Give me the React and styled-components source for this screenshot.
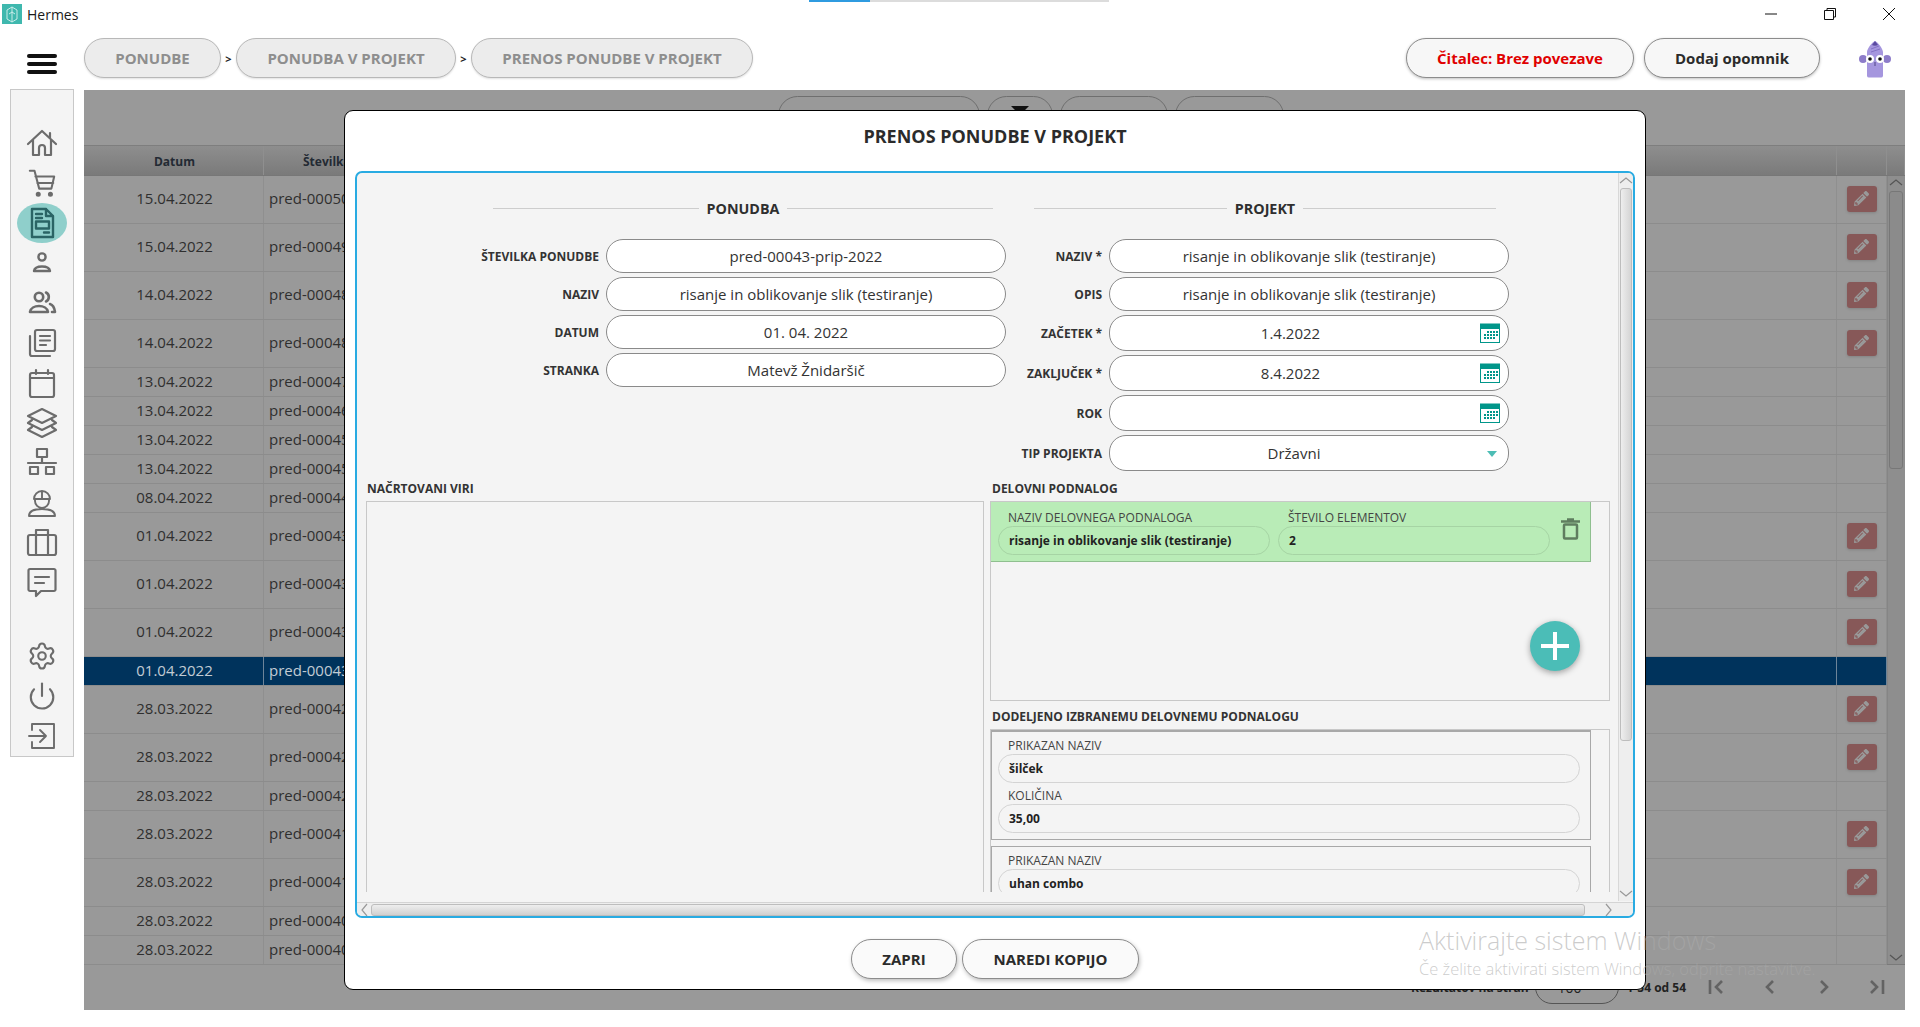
import React from 'react';
import styled, { createGlobalStyle } from 'styled-components';
import { FaPencilAlt } from 'react-icons/fa';
import { Settings, Power } from 'lucide-react';

const GlobalStyle = createGlobalStyle`
  html, body { margin: 0; padding: 0; background: #fff; }
  * { box-sizing: border-box; }
  body { font-family: "Open Sans", "Liberation Sans", sans-serif; color: #333; }
`;

const Page = styled.div`
  position: relative;
  width: 1920px;
  height: 1027px;
  overflow: hidden;
  background: #fff;
`;

/* window chrome */
const TitleBar = styled.div`
  position: relative;
  display: flex;
  align-items: center;
  height: 30px;
  padding: 0 0 2px 2px;
  font: 400 14px "Open Sans", sans-serif;
  color: #1a1a1a;
  span { margin-left: 5px; }
`;

const Progress = styled.div`
  position: absolute;
  top: 0;
  left: 809px;
  width: 300px;
  height: 2px;
  background: linear-gradient(to right, #2f9be0 0 61px, #dcdcdc 61px);
`;

const WindowButtons = styled.div`
  display: flex;
  margin-left: auto;
  padding-right: 2px;
`;

const WindowButton = styled.div`
  display: flex;
  align-items: center;
  justify-content: center;
  width: 59px;
  height: 26px;
`;

const TopBar = styled.div`
  display: flex;
  align-items: flex-start;
  height: 59px;
  padding: 8px 29px 0 27px;
`;

const Hamburger = styled.div`
  display: flex;
  flex-direction: column;
  gap: 4px;
  width: 30px;
  margin: 16px 27px 0 0;
  i {
    display: block;
    height: 4px;
    border-radius: 2px;
    background: #111;
  }
`;

const Crumbs = styled.div`
  display: flex;
  align-items: center;
`;

const Crumb = styled.div`
  display: flex;
  align-items: center;
  justify-content: center;
  width: ${({ $w }) => $w}px;
  height: 40px;
  border: 1px solid #b8b8b8;
  border-radius: 20px;
  background: #ececec;
  font-size: 15px;
  font-weight: 700;
  color: #8e8e8e;
  box-shadow: 0 1px 2px rgba(0,0,0,0.12);
`;

const CrumbArrow = styled.span`
  width: 15px;
  text-align: center;
  font-size: 11px;
  font-weight: 700;
  color: #222;
`;

const TopActions = styled.div`
  display: flex;
  align-items: center;
  gap: 10px;
  margin-left: auto;
`;

const TopButton = styled.div`
  display: flex;
  align-items: center;
  justify-content: center;
  width: ${({ $w }) => $w}px;
  height: 40px;
  border: 1.5px solid #8c8c8c;
  border-radius: 20px;
  background: #f7f7f7;
  font-size: 15px;
  font-weight: 700;
  color: ${({ $alert }) => $alert ? '#e00000' : '#2b2b2b'};
  box-shadow: 0 1px 3px rgba(0,0,0,0.25);
`;

const AvatarSlot = styled.div`
  width: 32px;
  height: 38px;
  margin-left: 29px;
  margin-top: 2px;
`;

/* page */
const Body = styled.div`
  display: flex;
  align-items: flex-start;
  gap: 10px;
  padding-left: 10px;
`;

const Sidebar = styled.nav`
  display: flex;
  flex-direction: column;
  align-items: center;
  width: 64px;
  height: 668px;
  padding-top: 33px;
  border: 1px solid #c8c8c8;
  background: #f4f4f4;
`;

const NavItem = styled.div`
  position: relative;
  display: flex;
  align-items: center;
  justify-content: center;
  width: 50px;
  height: 40px;
  margin-top: ${({ $gap }) => $gap ? '34px' : '0'};
  border-radius: 50%;
  background: ${({ $active }) => $active ? '#8fcfcb' : 'transparent'};
  color: ${({ $active }) => $active ? '#2a6465' : '#6c6c6c'};
`;

const Main = styled.main`
  display: flex;
  flex-direction: column;
  width: 1821px;
  height: 920px;
  margin-top: 1px;
  padding-top: 6px;
  background: #999;
`;

const Toolbar = styled.div`
  display: flex;
  gap: 7px;
  height: 39px;
  margin-bottom: 10px;
  padding-left: 694px;
`;

const ToolPill = styled.div`
  width: ${({ $w }) => $w}px;
  height: 39px;
  border: 1px solid #6f6f6f;
  border-radius: 20px;
  text-align: center;
  svg { margin-top: 8px; }
`;

const TableHead = styled.div`
  display: grid;
  grid-template-columns: 180px 1fr 50px 18px;
  height: 31px;
  border-top: 1px solid #7e7e7e;
  border-bottom: 1px solid #777;
  background: linear-gradient(#8e8e8e, #7a7a7a);
`;

const HeadCell = styled.div`
  display: flex;
  align-items: center;
  justify-content: ${({ $left }) => $left ? 'flex-start' : 'center'};
  padding: 2px 0 0 ${({ $left }) => $left ? '39px' : '2px'};
  border-right: 1px solid #8f8f8f;
  font-size: 12px;
  font-weight: 700;
  color: #232a33;
`;

const TableBody = styled.div`
  display: flex;
  height: 789px;
  border-bottom: 1px solid #7a7a7a;
`;

const Rows = styled.div`
  flex: 1;
`;

const Row = styled.div`
  display: grid;
  grid-template-columns: 180px 1fr 50px;
  height: ${({ $tall }) => $tall ? 48 : 29}px;
  border-bottom: 1px solid #8c8c8c;
  background: ${({ $selected }) => $selected ? '#00335c' : 'transparent'};
  color: ${({ $selected }) => $selected ? '#c2ccd4' : '#2f2f2f'};
  font-size: 15px;
  & > div { padding-bottom: ${({ $tall }) => $tall ? 4 : 2}px; }
`;

const Cell = styled.div`
  display: flex;
  align-items: center;
  justify-content: ${({ $center }) => $center ? 'center' : 'flex-start'};
  padding-left: ${({ $center }) => $center ? '2px' : '5px'};
  border-right: 1px solid ${({ $selected }) => $selected ? '#6d8499' : '#8f8f8f'};
  white-space: nowrap;
`;

const EditButton = styled.div`
  display: flex;
  align-items: center;
  justify-content: center;
  width: 30px;
  height: 26px;
  margin: 2px 0 0 -2px;
  border-radius: 3px;
  background: #875858;
  color: #999;
  box-shadow: 0 1px 3px rgba(0,0,0,0.15);
`;

const TableScroll = styled.div`
  position: relative;
  width: 18px;
  background: #8e8e8e;
  border-left: 1px solid #858585;
`;

const TableThumb = styled.div`
  position: absolute;
  top: 15px;
  left: 1px;
  width: 14px;
  height: 278px;
  border: 1px solid #777;
  border-radius: 3px;
  background: #8b8b8b;
`;

const ScrollArrow = styled.svg`
  position: absolute;
  display: block;
`;

const Pagination = styled.div`
  display: flex;
  align-items: center;
  justify-content: flex-end;
  height: 44px;
  padding-right: 1px;
  font-size: 12px;
  font-weight: 700;
  color: #222;
`;

const PageInfo = styled.span`
  margin-right: 2px;
`;

const PageSize = styled.div`
  position: relative;
  width: 84px;
  height: 34px;
  margin: 0 8px 0 6px;
  padding: 7px 0 0 22px;
  border: 1px solid #555;
  border-radius: 17px;
  font-size: 14px;
  font-weight: 400;
  &::after {
    content: '';
    position: absolute;
    top: 14px;
    right: 10px;
    border: 4px solid transparent;
    border-top: 5px solid #2f8f8a;
  }
`;

const PageButton = styled.div`
  display: flex;
  align-items: center;
  justify-content: center;
  width: 54px;
  color: #636363;
`;

/* dialog */
const Modal = styled.section`
  position: absolute;
  top: 110px;
  left: 344px;
  display: flex;
  flex-direction: column;
  align-items: center;
  width: 1302px;
  height: 880px;
  border: 1px solid #000;
  border-radius: 9px;
  background: #fff;
`;

const ModalTitle = styled.h1`
  width: 100%;
  height: 60px;
  margin: 0;
  font-size: 18px;
  font-weight: 700;
  line-height: 50px;
  text-align: center;
  color: #2b2b2b;
`;

const Panel = styled.div`
  display: flex;
  flex-direction: column;
  width: 1280px;
  height: 747px;
  border: 2px solid #29abe2;
  border-radius: 7px;
  background: #f4f4f4;
  overflow: hidden;
`;

const PanelMain = styled.div`
  display: flex;
  height: 729px;
`;

const Viewport = styled.div`
  width: 1261px;
  height: 719px;
  overflow: hidden;
`;

const FormGrid = styled.div`
  display: flex;
  align-items: flex-start;
  padding-top: 25px;
`;

const FormColumn = styled.div`
  display: grid;
  grid-template-columns: ${({ $label }) => $label}px 400px;
  column-gap: 7px;
  row-gap: 4px;
`;

const Divider = styled.div`
  grid-column: 1 / -1;
  display: flex;
  align-items: center;
  gap: 8px;
  height: 20px;
  margin: 0 ${({ $right }) => $right}px 17px ${({ $left }) => $left}px;
  font-size: 14.3px;
  font-weight: 700;
  color: #2f2f2f;
  &::before, &::after {
    content: '';
    flex: 1;
    height: 1px;
    background: #cdcdcd;
  }
`;

const FieldLabel = styled.label`
  display: flex;
  align-items: center;
  justify-content: flex-end;
  font-size: 12px;
  font-weight: 700;
  color: #333;
  white-space: nowrap;
`;

const Input = styled.div`
  position: relative;
  display: flex;
  align-items: center;
  justify-content: center;
  height: ${({ $h }) => $h || 34}px;
  padding-right: ${({ $pad }) => $pad || 0}px;
  border: 1px solid #8a8a8a;
  border-radius: 17px;
  background: #fff;
  font-size: 15px;
  color: #333;
`;

const InputIcon = styled.span`
  position: absolute;
  top: 7px;
  right: 8px;
  display: flex;
`;

const SelectArrow = styled.span`
  position: absolute;
  top: 15px;
  right: 11px;
  border: 5px solid transparent;
  border-top: 6px solid #4dbdb5;
  border-bottom: 0;
`;

const LowerGrid = styled.div`
  display: grid;
  grid-template-columns: 618px 620px;
  column-gap: 6px;
  padding: 9px 0 0 9px;
`;

const LowerColumn = styled.div`
  display: flex;
  flex-direction: column;
`;

const SectionTitle = styled.div`
  height: 16px;
  margin-bottom: 5px;
  padding-left: ${({ $pad }) => $pad}px;
  font-size: 12px;
  font-weight: 700;
  line-height: 18px;
  color: #333;
  white-space: nowrap;
`;

const Box = styled.div`
  position: relative;
  flex: ${({ $grow }) => $grow ? 1 : 'none'};
  height: ${({ $h }) => $h ? `${$h}px` : 'auto'};
  border: 1px solid #c8c8c8;
`;

const OrderCard = styled.div`
  display: flex;
  width: 600px;
  height: 60px;
  padding: 8px 0 0 7px;
  border-right: 1px solid #8fbf8f;
  border-bottom: 1px solid #8fbf8f;
  background: #b9ecb7;
  gap: 8px;
`;

const OrderField = styled.div`
  width: 272px;
`;

const MiniLabel = styled.div`
  height: 16px;
  padding-left: 10px;
  font-size: 12px;
  line-height: 16px;
  color: #444;
  white-space: nowrap;
`;

const ValuePill = styled.div`
  display: flex;
  align-items: center;
  height: 29px;
  padding-left: 10px;
  border: 1px solid ${({ $green }) => $green ? '#a6d4a4' : '#d4d4d4'};
  border-radius: 15px;
  font-size: 12px;
  font-weight: 700;
  color: #222;
`;

const TrashSlot = styled.div`
  margin: 8px 0 0 3px;
  color: #5f7d5f;
`;

const AddButton = styled.div`
  position: absolute;
  top: 119px;
  right: 29px;
  display: flex;
  align-items: center;
  justify-content: center;
  width: 50px;
  height: 50px;
  border-radius: 50%;
  background: #4bbdb7;
  box-shadow: 0 2px 6px rgba(0,0,0,0.35);
`;

const ItemCard = styled.div`
  width: 600px;
  height: ${({ $h }) => $h}px;
  margin-bottom: 6px;
  padding: 6px 10px 0 6px;
  border: 1px solid #a8a8a8;
  border-top-width: ${({ $thick }) => $thick ? '2px' : '1px'};
`;

const ItemGap = styled.div`
  height: 5px;
`;

const VerticalBar = styled.div`
  position: relative;
  width: 15px;
  height: 728px;
  margin-left: 0;
  border-left: 1px solid #d8d8d8;
  background: #eeeeee;
`;

const VerticalThumb = styled.div`
  position: absolute;
  top: 15px;
  left: 1px;
  width: 12px;
  height: 553px;
  border: 1px solid #bdbdbd;
  border-radius: 3px;
  background: linear-gradient(to right, #eeeeee, #d4d4d4);
`;

const HorizontalBar = styled.div`
  position: relative;
  flex: 1;
  border-top: 1px solid #d4d4d4;
  background: #eeeeee;
`;

const HorizontalThumb = styled.div`
  position: absolute;
  top: 1px;
  left: 14px;
  width: 1214px;
  height: 12px;
  border: 1px solid #bdbdbd;
  border-radius: 3px;
  background: linear-gradient(#eeeeee, #d0d0d0);
`;

const ModalActions = styled.div`
  display: flex;
  gap: 5px;
  padding-top: 21px;
`;

const ModalButton = styled.div`
  display: flex;
  align-items: center;
  justify-content: center;
  width: ${({ $w }) => $w}px;
  height: 40px;
  border: 1.5px solid #8c8c8c;
  border-radius: 20px;
  background: #fafafa;
  font-size: 15px;
  font-weight: 700;
  color: #2b2b2b;
  box-shadow: 1px 2px 4px rgba(0,0,0,0.25);
`;

const Watermark = styled.div`
  position: absolute;
  top: 923px;
  left: 1419px;
  color: rgba(170,170,170,0.6);
  font-weight: 300;
  white-space: nowrap;
  pointer-events: none;
  div:first-child { font-size: 25px; line-height: 34px; }
  div:last-child { font-size: 16.5px; line-height: 22px; margin-top: 1px; }
`;

const Svg = ({ children, size = 32, fill = 'none', sw = 2.2 }) => (
  <svg width={size} height={size} viewBox="0 0 32 32" fill={fill} stroke="currentColor" strokeWidth={sw} strokeLinecap="round" strokeLinejoin="round">
    {children}
  </svg>
);

const icons = {
  home: <Svg><path d="M2 17 16 4l14 13M24 11V6M7 13v15h6v-7a3 3 0 0 1 6 0v7h6V13" /></Svg>,
  cart: <Svg size={30}><path d="M3 3h5l5 19h13l3-13H9M11 16h17" /><circle cx="12" cy="28" r="1.6" fill="currentColor" /><circle cx="25" cy="28" r="1.6" fill="currentColor" /></Svg>,
  doc: <Svg sw={2.4}><path d="M6 2h14l7 7v21H6zM20 2v7h7M10 7h6M10 11h6M10 14.5h13v7H10zM18 25.5h5" /></Svg>,
  person: <Svg sw={2.4}><circle cx="16" cy="10" r="3.6" /><path d="M8 24c1-6 15-6 16 0z" /></Svg>,
  people: <Svg sw={2.6}><circle cx="13" cy="10" r="4.2" /><path d="M4 25c1-8 17-8 18 0zM20 5.5a5 5 0 0 1 0 9M24 17c3 1 4.500 4 5 8h-3" /></Svg>,
  copy: <Svg><rect x="9" y="3" width="20" height="21" rx="2" /><path d="M4 9v18a2 2 0 0 0 2 2h18M14 9h10M14 13.500h10M14 18h6" /></Svg>,
  calendar: <Svg><rect x="4" y="6" width="24" height="24" rx="2" /><path d="M4 11h24M10 3v4M22 3v4" /></Svg>,
  layers: <Svg><path d="M16 2 30 9l-14 7L2 9zM6 13l-4 3 14 7 14-7-4-3M6 20l-4 3 14 7 14-7-4-3" /></Svg>,
  network: <Svg><rect x="11" y="3" width="10" height="8" /><path d="M16 11v6M2 17h28" /><rect x="4" y="21" width="8" height="7" /><rect x="20" y="21" width="8" height="7" /></Svg>,
  worker: <Svg sw={1.9}><path d="M8 13a8 8 0 0 1 16 0zM16 5v8M9 13v2a7 7 0 0 0 14 0v-2M3 30c0-6 7-7 13-7s13 1 13 7z" /></Svg>,
  briefcase: <Svg><rect x="2" y="9" width="28" height="20" rx="2" /><path d="M10 9V4h12v5M10 9v20M22 9v20" /></Svg>,
  chat: <Svg><path d="M4 3h24a1.500 1.500 0 0 1 1.500 1.500v19a1.500 1.500 0 0 1-1.500 1.500H15l-5 5v-5H4a1.500 1.500 0 0 1-1.500-1.500v-19A1.500 1.500 0 0 1 4 3zM9 11h14M9 17h9" /></Svg>,
  exit: <Svg sw={1.9}><path d="M6 10V4h22v24H6v-6M3 16h17M14 10l6 6-6 6" /></Svg>
};

const navItems = [
  { key: 'home' },
  { key: 'cart' },
  { key: 'doc', active: true },
  { key: 'person' },
  { key: 'people' },
  { key: 'copy' },
  { key: 'calendar' },
  { key: 'layers' },
  { key: 'network' },
  { key: 'worker' },
  { key: 'briefcase' },
  { key: 'chat' }
];

const rows = [
  ['15.04.2022', 'pred-00050', 1],
  ['15.04.2022', 'pred-00049', 1],
  ['14.04.2022', 'pred-00048', 1],
  ['14.04.2022', 'pred-00048', 1],
  ['13.04.2022', 'pred-00047', 0],
  ['13.04.2022', 'pred-00046', 0],
  ['13.04.2022', 'pred-00045', 0],
  ['13.04.2022', 'pred-00045', 0],
  ['08.04.2022', 'pred-00044', 0],
  ['01.04.2022', 'pred-00043', 1],
  ['01.04.2022', 'pred-00043', 1],
  ['01.04.2022', 'pred-00043', 1],
  ['01.04.2022', 'pred-00043', 0, true],
  ['28.03.2022', 'pred-00042', 1],
  ['28.03.2022', 'pred-00042', 1],
  ['28.03.2022', 'pred-00042', 0],
  ['28.03.2022', 'pred-00041', 1],
  ['28.03.2022', 'pred-00041', 1],
  ['28.03.2022', 'pred-00040', 0],
  ['28.03.2022', 'pred-00040', 0]
];

const AppLogo = () => (
  <svg width="20" height="20" viewBox="0 0 20 20">
    <rect width="20" height="20" fill="#3fb8ae" />
    <path d="M10 3 15 6v9l-5 3-5-3V6zM10 3v15M7 10l3-2 3 2" fill="none" stroke="#d8f2ef" strokeWidth="0.9" />
  </svg>
);

const Avatar = () => (
  <svg width="32" height="38" viewBox="0 0 32 38">
    <circle cx="4" cy="19" r="4" fill="#8d7cc9" />
    <circle cx="28" cy="19" r="4" fill="#8d7cc9" />
    <path d="M8 36V12c0-3 5-10 8-11 3 1 8 8 8 11v24a2 2 0 0 1-2 1.500H10A2 2 0 0 1 8 36z" fill="#a596de" />
    <path d="M13 5 16 1l3 4c-2 1-4 1-6 0z" fill="#5a4aa0" />
    <path d="M12 9l8-3M12 12l9-3" stroke="#7a68bf" strokeWidth="0.8" />
    <circle cx="11" cy="19" r="4" fill="#fff" />
    <circle cx="21" cy="19" r="4" fill="#fff" />
    <circle cx="11" cy="19" r="1.800" fill="#111" />
    <circle cx="21" cy="19" r="1.800" fill="#111" />
    <path d="M16 22v4" stroke="#3a3070" strokeWidth="0.8" />
  </svg>
);

const CalendarIcon = () => (
  <svg width="20" height="20" viewBox="0 0 20 20">
    <rect x="0.5" y="1" width="19" height="18.500" fill="#fff" stroke="#00968a" />
    <rect x="0" y="1" width="20" height="5" fill="#00968a" />
    <g fill="#00968a">
      {[8, 11, 14].map(y => [4, 7, 10, 13, 16].map(x => (y > 8 || x > 4) && (y < 14 || x < 16) && <rect key={`${x}-${y}`} x={x} y={y} width="2" height="2" />))}
    </g>
  </svg>
);

const TrashIcon = () => (
  <svg width="19" height="22" viewBox="0 0 19 22" fill="none" stroke="currentColor">
    <path d="M0 3.500h19M6 1.500h7" strokeWidth="2.500" />
    <rect x="3" y="6.500" width="13" height="14" rx="1" strokeWidth="2.500" />
  </svg>
);

const Chevron = ({ dir, color = '#999', style }) => {
  const d = { up: 'M1 7 7 2l6 5', down: 'M1 2 7 7l6-5', left: 'M7 1 2 7l5 6', right: 'M2 1 7 7l-5 6' }[dir];
  const vertical = dir === 'up' || dir === 'down';
  return (
    <ScrollArrow style={style} width={vertical ? 14 : 9} height={vertical ? 9 : 14} viewBox={vertical ? '0 0 14 9' : '0 0 9 14'} fill="none" stroke={color} strokeWidth="1.200">
      <path d={d} />
    </ScrollArrow>
  );
};

const PageIcon = ({ d }) => (
  <svg width="18" height="16" viewBox="0 0 18 16" fill="none" stroke="currentColor" strokeWidth="2.600">
    <path d={d} />
  </svg>
);

const FormRow = ({ label, value, h, icon, select, pad }) => (
  <>
    <FieldLabel>{label}</FieldLabel>
    <Input $h={h} $pad={pad}>
      {value}
      {icon && <InputIcon><CalendarIcon /></InputIcon>}
      {select && <SelectArrow />}
    </Input>
  </>
);

const ItemFields = ({ name, amount }) => (
  <>
    <MiniLabel>PRIKAZAN NAZIV</MiniLabel>
    <ValuePill>{name}</ValuePill>
    {amount && (
      <>
        <ItemGap />
        <MiniLabel>KOLIČINA</MiniLabel>
        <ValuePill>{amount}</ValuePill>
      </>
    )}
  </>
);

export default function App() {
  return (
    <Page>
      <GlobalStyle />
      <TitleBar>
        <AppLogo />
        <span>Hermes</span>
        <Progress />
        <WindowButtons>
          <WindowButton>
            <svg width="12" height="12" viewBox="0 0 12 12" stroke="#111"><path d="M0 6h12" /></svg>
          </WindowButton>
          <WindowButton>
            <svg width="12" height="12" viewBox="0 0 12 12" fill="none" stroke="#111"><path d="M3 2.500V.5h8.500V9H9.500M.5 2.500H9.500V11.500H.5z" /></svg>
          </WindowButton>
          <WindowButton>
            <svg width="12" height="12" viewBox="0 0 12 12" stroke="#111"><path d="M0 0l12 12M12 0 0 12" /></svg>
          </WindowButton>
        </WindowButtons>
      </TitleBar>

      <TopBar>
        <Hamburger><i /><i /><i /></Hamburger>
        <Crumbs>
          <Crumb $w={137}>PONUDBE</Crumb>
          <CrumbArrow>&gt;</CrumbArrow>
          <Crumb $w={220}>PONUDBA V PROJEKT</Crumb>
          <CrumbArrow>&gt;</CrumbArrow>
          <Crumb $w={282}>PRENOS PONUDBE V PROJEKT</Crumb>
        </Crumbs>
        <TopActions>
          <TopButton $w={228} $alert>Čitalec: Brez povezave</TopButton>
          <TopButton $w={176}>Dodaj opomnik</TopButton>
          <AvatarSlot><Avatar /></AvatarSlot>
        </TopActions>
      </TopBar>

      <Body>
        <Sidebar>
          {navItems.map(item => (
            <NavItem key={item.key} $active={item.active}>{icons[item.key]}</NavItem>
          ))}
          <NavItem $gap><Settings size={30} strokeWidth={1.7} /></NavItem>
          <NavItem><Power size={30} strokeWidth={1.7} /></NavItem>
          <NavItem>{icons.exit}</NavItem>
        </Sidebar>

        <Main>
          <Toolbar>
            <ToolPill $w={202} />
            <ToolPill $w={66}>
              <svg width="18" height="8" viewBox="0 0 18 8"><path d="M0 0h18l-6 6v2H6V6z" fill="#111" /></svg>
            </ToolPill>
            <ToolPill $w={108} />
            <ToolPill $w={109} />
          </Toolbar>

          <TableHead>
            <HeadCell>Datum</HeadCell>
            <HeadCell $left>Številka</HeadCell>
            <HeadCell />
            <HeadCell />
          </TableHead>
          <TableBody>
            <Rows>
              {rows.map(([date, number, tall, selected], i) => (
                <Row key={i} $tall={tall} $selected={selected}>
                  <Cell $center $selected={selected}>{date}</Cell>
                  <Cell $selected={selected}>{number}</Cell>
                  <Cell $center $selected={selected}>
                    {tall ? <EditButton><FaPencilAlt size={15} /></EditButton> : null}
                  </Cell>
                </Row>
              ))}
            </Rows>
            <TableScroll>
              <Chevron dir="up" color="#555" style={{ top: 2, left: 1 }} />
              <TableThumb />
              <Chevron dir="down" color="#555" style={{ bottom: 2, left: 1 }} />
            </TableScroll>
          </TableBody>
          <Pagination>
            Rezultatov na stran
            <PageSize>100</PageSize>
            <PageInfo>1-54 od 54</PageInfo>
            <PageButton><PageIcon d="M4 1v14M16 2 10 8l6 6" /></PageButton>
            <PageButton><PageIcon d="M13 2 7 8l6 6" /></PageButton>
            <PageButton><PageIcon d="M7 2l6 6-6 6" /></PageButton>
            <PageButton><PageIcon d="M3 2l6 6-6 6M15 1v14" /></PageButton>
          </Pagination>
        </Main>
      </Body>

      <Modal>
        <ModalTitle>PRENOS PONUDBE V PROJEKT</ModalTitle>
        <Panel>
          <PanelMain>
            <Viewport>
              <FormGrid>
                <FormColumn $label={242}>
                  <Divider $left={136} $right={13}>PONUDBA</Divider>
                  <FormRow label="ŠTEVILKA PONUDBE" value="pred-00043-prip-2022" />
                  <FormRow label="NAZIV" value="risanje in oblikovanje slik (testiranje)" />
                  <FormRow label="DATUM" value="01. 04. 2022" />
                  <FormRow label="STRANKA" value="Matevž Žnidaršič" />
                </FormColumn>
                <FormColumn $label={96}>
                  <Divider $left={28} $right={13}>PROJEKT</Divider>
                  <FormRow label="NAZIV *" value="risanje in oblikovanje slik (testiranje)" />
                  <FormRow label="OPIS" value="risanje in oblikovanje slik (testiranje)" />
                  <FormRow label="ZAČETEK *" value="1.4.2022" h={36} pad={37} icon />
                  <FormRow label="ZAKLJUČEK *" value="8.4.2022" h={36} pad={37} icon />
                  <FormRow label="ROK" h={36} icon />
                  <FormRow label="TIP PROJEKTA" value="Državni" h={36} pad={30} select />
                </FormColumn>
              </FormGrid>

              <LowerGrid>
                <LowerColumn>
                  <SectionTitle $pad={1}>NAČRTOVANI VIRI</SectionTitle>
                  <Box $grow />
                </LowerColumn>
                <LowerColumn>
                  <SectionTitle $pad={2}>DELOVNI PODNALOG</SectionTitle>
                  <Box $h={200}>
                    <OrderCard>
                      <OrderField>
                        <MiniLabel>NAZIV DELOVNEGA PODNALOGA</MiniLabel>
                        <ValuePill $green>risanje in oblikovanje slik (testiranje)</ValuePill>
                      </OrderField>
                      <OrderField>
                        <MiniLabel>ŠTEVILO ELEMENTOV</MiniLabel>
                        <ValuePill $green>2</ValuePill>
                      </OrderField>
                      <TrashSlot><TrashIcon /></TrashSlot>
                    </OrderCard>
                    <AddButton>
                      <svg width="28" height="28" viewBox="0 0 28 28" stroke="#fff" strokeWidth="4"><path d="M14 0v28M0 14h28" /></svg>
                    </AddButton>
                  </Box>
                  <SectionTitle $pad={2} style={{ marginTop: 7 }}>DODELJENO IZBRANEMU DELOVNEMU PODNALOGU</SectionTitle>
                  <Box>
                    <ItemCard $h={110} $thick><ItemFields name="šilček" amount="35,00" /></ItemCard>
                    <ItemCard $h={110}><ItemFields name="uhan combo" /></ItemCard>
                  </Box>
                </LowerColumn>
              </LowerGrid>
            </Viewport>
            <VerticalBar>
              <Chevron dir="up" style={{ top: 3, left: 0 }} />
              <VerticalThumb />
              <Chevron dir="down" style={{ bottom: 3, left: 0 }} />
            </VerticalBar>
          </PanelMain>
          <HorizontalBar>
            <Chevron dir="left" style={{ top: 0, left: 3 }} />
            <HorizontalThumb />
            <Chevron dir="right" style={{ top: 0, right: 20 }} />
          </HorizontalBar>
        </Panel>
        <ModalActions>
          <ModalButton $w={106}>ZAPRI</ModalButton>
          <ModalButton $w={177}>NAREDI KOPIJO</ModalButton>
        </ModalActions>
      </Modal>

      <Watermark>
        <div>Aktivirajte sistem Windows</div>
        <div>Če želite aktivirati sistem Windows, odprite nastavitve.</div>
      </Watermark>
    </Page>
  );
}
